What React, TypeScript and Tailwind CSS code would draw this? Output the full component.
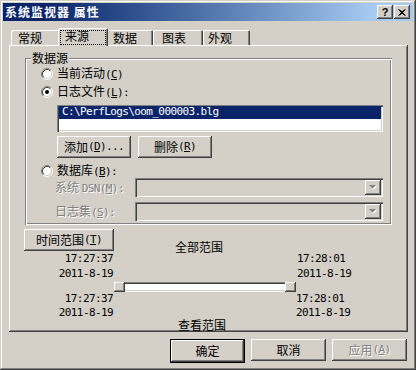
import type { ReactNode } from "react";

// latin glyphs of the old bitmap font are 6px wide
const LAT = "font-[family-name:'DejaVu_Sans_Mono',monospace] text-[11px] tracking-[-0.6px]";
const RAISED = "shadow-[inset_-1px_-1px_0_#404040,inset_1px_1px_0_#fff,inset_-2px_-2px_0_#808080]";
const SUNKEN = "shadow-[inset_1px_1px_0_#808080,inset_2px_2px_0_#404040,inset_-1px_-1px_0_#fff,inset_-2px_-2px_0_#D4D0C8]";
const GRAYED = "text-[#808080] [text-shadow:1px_1px_0_#fff]";

function Key({ k }: { k: string }) {
  return (
    <span className={LAT}>
      (<span className="underline underline-offset-[1px]">{k}</span>)
    </span>
  );
}

function Radio({ checked }: { checked?: boolean }) {
  return (
    <svg width="12" height="12" viewBox="0 0 12 12" className="shrink-0">
      <circle cx="6" cy="6" r="4.5" fill="#fff" />
      <path d="M2.11 9.89A5.5 5.5 0 0 1 9.89 2.11" fill="none" stroke="#808080" />
      <path d="M9.89 2.11A5.5 5.5 0 0 1 2.11 9.89" fill="none" stroke="#fff" />
      <path d="M2.82 9.18A4.5 4.5 0 0 1 9.18 2.82" fill="none" stroke="#404040" />
      <path d="M9.18 2.82A4.5 4.5 0 0 1 2.82 9.18" fill="none" stroke="#D4D0C8" />
      {checked && <circle cx="6" cy="6" r="2" fill="#000" />}
    </svg>
  );
}

function Button({ children, className = "" }: { children: ReactNode; className?: string }) {
  return (
    <div className={`flex h-[22px] items-center justify-center bg-[#D4D0C8] leading-[12px] ${RAISED} ${className}`}>
      {children}
    </div>
  );
}

function Combo() {
  return (
    <div className={`flex h-[19px] w-[248px] justify-end bg-[#D4D0C8] p-[2px] ${SUNKEN}`}>
      <div className={`flex w-[16px] items-center justify-center ${RAISED}`}>
        <svg width="8" height="5" viewBox="0 0 8 5">
          <path d="M1 1h7L4.5 4.5z" fill="#fff" />
          <path d="M0 0h7L3.5 3.5z" fill="#808080" />
        </svg>
      </div>
    </div>
  );
}

function Tab({ label, className }: { label: string; className: string }) {
  return (
    <div
      className={`flex h-[15px] items-center rounded-t-[2px] pt-[1px] leading-[12px] shadow-[inset_1px_1px_0_#fff,inset_-1px_0_0_#404040,inset_-2px_0_0_#808080] ${className}`}
    >
      {label}
    </div>
  );
}

function Time({ children, className = "" }: { children: ReactNode; className?: string }) {
  return <div className={`${LAT} ${className}`}>{children}</div>;
}

export default function App() {
  return (
    <div className="flex h-[370px] w-[416px] flex-col bg-[#D4D0C8] p-[3px] font-[family-name:'Noto_Sans_CJK_SC',sans-serif] text-[12px] text-black shadow-[inset_-1px_-1px_0_#404040,inset_1px_1px_0_#D4D0C8,inset_-2px_-2px_0_#808080,inset_2px_2px_0_#fff]">
      {/* title bar */}
      <div className="flex h-[18px] items-center justify-between bg-linear-to-r from-[#0A246A] from-10% to-[#A6CAF0] to-90% pl-[2px] pr-[3px]">
        <span className="font-bold leading-[12px] tracking-[1px] text-white">系统监视器 属性</span>
        <div className="flex gap-[1px]">
          <div className={`flex h-[14px] w-[16px] items-center justify-center bg-[#D4D0C8] ${RAISED}`}>
            <span className="font-[family-name:'Liberation_Sans',sans-serif] text-[11px] font-bold leading-[11px]">?</span>
          </div>
          <div className={`flex h-[14px] w-[16px] items-center justify-center bg-[#D4D0C8] ${RAISED}`}>
            <svg width="8" height="7" viewBox="0 0 8 7">
              <path d="M0.5 0.5l6 6M1.5 0.5l6 6M6.5 0.5l-6 6M7.5 0.5l-6 6" stroke="#000" strokeWidth="1" />
            </svg>
          </div>
        </div>
      </div>

      {/* tabs */}
      <div className="ml-[8px] mt-[7px] flex h-[17px] items-end">
        <Tab label="常规" className="w-[49px] pl-[7px]" />
        <div className="relative z-10 -mx-[2px] mb-[-1px] flex h-[18px] w-[50px] items-start rounded-t-[2px] bg-[#D4D0C8] pl-[7px] pt-[2px] leading-[12px] shadow-[inset_1px_1px_0_#fff,inset_-1px_0_0_#404040,inset_-2px_0_0_#808080]">
          来源
          <div className="absolute bottom-[1px] left-[2px] right-[2px] top-[2px] border border-dotted border-black" />
        </div>
        <Tab label="数据" className="w-[47px] pl-[7px]" />
        <Tab label="图表" className="w-[50px] pl-[9px]" />
        <Tab label="外观" className="w-[47px] pl-[5px]" />
      </div>

      {/* tab page */}
      <div className={`ml-[6px] flex h-[287px] w-[399px] flex-col px-[16px] pt-[13px] ${RAISED}`}>
        <div className="relative flex h-[167px] flex-col pl-[16px] pt-[9px] shadow-[inset_1px_1px_0_#808080,inset_2px_2px_0_#fff,inset_-1px_-1px_0_#fff,inset_-2px_-2px_0_#808080]">
          <span className="absolute left-[6px] top-[-6px] bg-[#D4D0C8] px-[1px] leading-[12px]">数据源</span>

          <div className="flex h-[14px] items-center gap-[4px] leading-[12px]">
            <Radio />
            <span>
              当前活动<Key k="C" />
            </span>
          </div>
          <div className="mt-[4px] flex h-[14px] items-center gap-[4px] leading-[12px]">
            <Radio checked />
            <span>
              日志文件<Key k="L" />
              <span className={LAT}>:</span>
            </span>
          </div>

          <div className={`ml-[16px] mt-[6px] h-[27px] w-[326px] bg-white px-[2px] pt-[1px] ${SUNKEN}`}>
            <div className={`h-[13px] bg-[#0A246A] pl-[3px] leading-[12px] text-white ${LAT}`}>C:\PerfLogs\oom_000003.blg</div>
          </div>

          <div className="ml-[16px] mt-[4px] flex gap-[7px]">
            <Button className="w-[74px]">
              添加<Key k="D" />
              <span className={LAT}>...</span>
            </Button>
            <Button className="w-[74px]">
              删除<Key k="R" />
            </Button>
          </div>

          <div className="mt-[6px] flex h-[14px] items-center gap-[4px] leading-[12px]">
            <Radio />
            <span>
              数据库<Key k="B" />
              <span className={LAT}>:</span>
            </span>
          </div>
          <div className="ml-[14px] flex items-center">
            <span className={`w-[80px] leading-[12px] ${GRAYED}`}>
              系统 <span className={LAT}>DSN</span>
              <Key k="M" />
              <span className={LAT}>:</span>
            </span>
            <Combo />
          </div>
          <div className="ml-[14px] mt-[5px] flex items-center">
            <span className={`w-[80px] leading-[12px] ${GRAYED}`}>
              日志集<Key k="S" />
              <span className={LAT}>:</span>
            </span>
            <Combo />
          </div>
        </div>

        {/* time range */}
        <div className="-ml-[1px] mt-[4px] grid grid-cols-[90px_182px_1fr] grid-rows-[22px_15px_15px_11px_14px_14px_10px]">
          <Button className="w-[90px]">
            时间范围<Key k="T" />
          </Button>
          <div className="pl-[61px] pt-[12px] leading-[12px]">全部范围</div>
          <div />

          <Time className="pr-[1px] text-right leading-[15px]">17:27:37</Time>
          <div />
          <Time className="pl-[1px] leading-[15px]">17:28:01</Time>

          <Time className="pr-[1px] text-right leading-[15px]">2011-8-19</Time>
          <div />
          <Time className="pl-[1px] leading-[15px]">2011-8-19</Time>

          <div />
          <div className={`mt-[1px] flex h-[10px] justify-between bg-white ${SUNKEN}`}>
            <div className={`h-[10px] w-[11px] bg-[#D4D0C8] ${RAISED}`} />
            <div className={`h-[10px] w-[11px] bg-[#D4D0C8] ${RAISED}`} />
          </div>
          <div />

          <Time className="pr-[1px] text-right leading-[14px]">17:27:37</Time>
          <div />
          <Time className="leading-[14px]">17:28:01</Time>

          <Time className="pr-[1px] text-right leading-[14px]">2011-8-19</Time>
          <div />
          <Time className="leading-[14px]">2011-8-19</Time>

          <div />
          <div className="pl-[64px] leading-[10px]">查看范围</div>
          <div />
        </div>
      </div>

      {/* dialog buttons */}
      <div className="mt-[7px] flex justify-end gap-[6px] pr-[6px]">
        <div className="border border-black">
          <Button className="h-[20px] w-[73px]">确定</Button>
        </div>
        <Button className="w-[75px]">取消</Button>
        <Button className={`w-[75px] ${GRAYED}`}>
          应用<Key k="A" />
        </Button>
      </div>
    </div>
  );
}
